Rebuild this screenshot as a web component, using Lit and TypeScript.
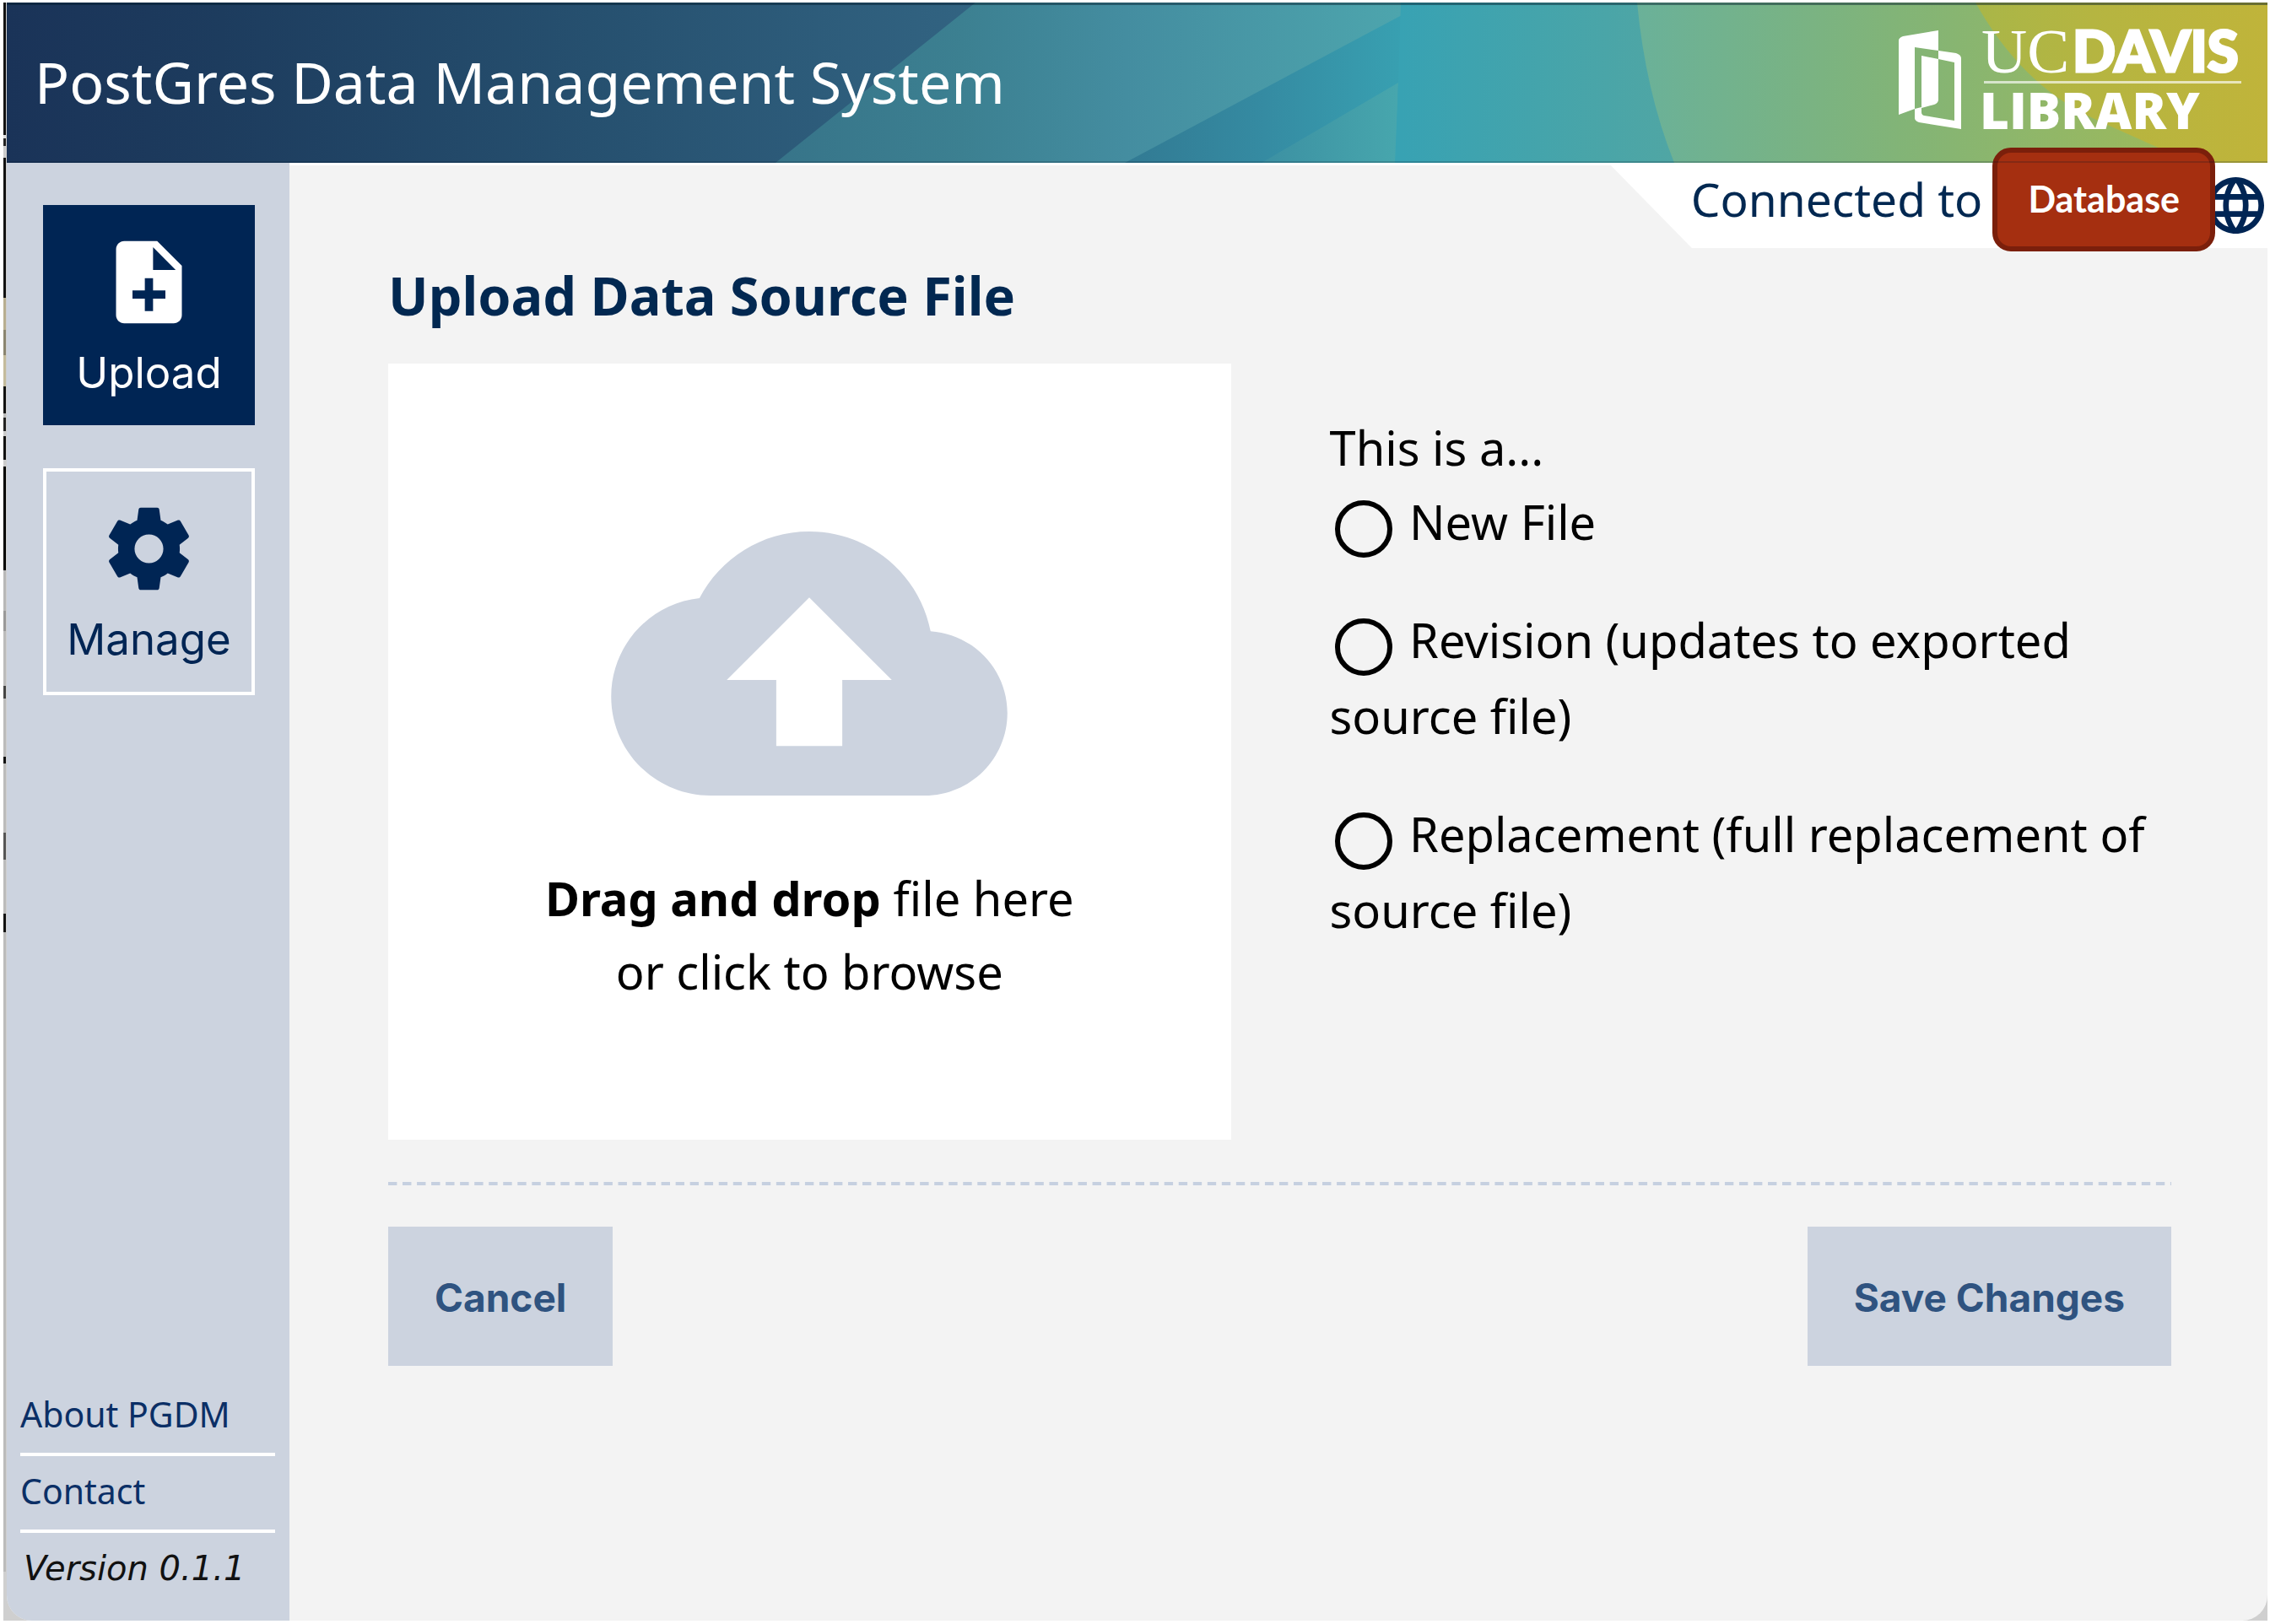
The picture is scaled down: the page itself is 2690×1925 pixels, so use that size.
import { LitElement, html, css, svg } from "lit";
import { customElement, state } from "lit/decorators.js";
import { classMap } from "lit/directives/class-map.js";

const ICONS = {
  upload:
    "M14 2H6c-1.1 0-1.99.9-1.99 2L4 20c0 1.1.89 2 1.99 2H18c1.1 0 2-.9 2-2V8l-6-6zm2 14h-3v3h-2v-3H8v-2h3v-3h2v3h3v2zm-3-7V3.5L18.5 9H13z",
  manage:
    "M12,15.5A3.5,3.5 0 0,1 8.5,12A3.5,3.5 0 0,1 12,8.5A3.5,3.5 0 0,1 15.5,12A3.5,3.5 0 0,1 12,15.5M19.43,12.97C19.47,12.65 19.5,12.33 19.5,12C19.5,11.67 19.47,11.34 19.43,11L21.54,9.37C21.73,9.22 21.78,8.95 21.66,8.73L19.66,5.27C19.54,5.05 19.27,4.96 19.05,5.05L16.56,6.05C16.04,5.66 15.5,5.32 14.87,5.07L14.5,2.42C14.46,2.18 14.25,2 14,2H10C9.75,2 9.54,2.18 9.5,2.42L9.13,5.07C8.5,5.32 7.96,5.66 7.44,6.05L4.95,5.05C4.73,4.96 4.46,5.05 4.34,5.27L2.34,8.73C2.21,8.95 2.27,9.22 2.46,9.37L4.57,11C4.53,11.34 4.5,11.67 4.5,12C4.5,12.33 4.53,12.65 4.57,12.97L2.46,14.63C2.27,14.78 2.21,15.05 2.34,15.27L4.34,18.73C4.46,18.95 4.73,19.03 4.95,18.95L7.44,17.94C7.96,18.34 8.5,18.68 9.13,18.93L9.5,21.58C9.54,21.82 9.75,22 10,22H14C14.25,22 14.46,21.82 14.5,21.58L14.87,18.93C15.5,18.67 16.04,18.34 16.56,17.94L19.05,18.95C19.27,19.03 19.54,18.95 19.66,18.73L21.66,15.27C21.78,15.05 21.73,14.78 21.54,14.63L19.43,12.97Z",
  cloud:
    "M19.35 10.04C18.67 6.59 15.64 4 12 4 9.11 4 6.6 5.64 5.35 8.04 2.34 8.36 0 10.91 0 14c0 3.31 2.69 6 6 6h13c2.76 0 5-2.24 5-5 0-2.64-2.05-4.78-4.65-4.96zM14 13v4h-4v-4H7l5-5 5 5h-3z",
  globe:
    "M11.99 2C6.47 2 2 6.48 2 12s4.47 10 9.99 10C17.52 22 22 17.52 22 12S17.52 2 11.99 2zm6.93 6h-2.95c-.32-1.25-.78-2.45-1.38-3.56 1.84.63 3.37 1.91 4.33 3.56zM12 4.04c.83 1.2 1.48 2.53 1.91 3.96h-3.82c.43-1.43 1.08-2.76 1.91-3.96zM4.26 14C4.1 13.36 4 12.69 4 12s.1-1.36.26-2h3.38c-.08.66-.14 1.32-.14 2 0 .68.06 1.34.14 2H4.26zm.82 2h2.95c.32 1.25.78 2.45 1.38 3.56-1.84-.63-3.37-1.9-4.33-3.56zm2.95-8H5.08c.96-1.66 2.49-2.93 4.33-3.56C8.81 5.55 8.35 6.75 8.03 8zM12 19.96c-.83-1.2-1.48-2.53-1.91-3.96h3.82c-.43 1.43-1.08 2.76-1.91 3.96zM14.34 14H9.66c-.09-.66-.16-1.32-.16-2 0-.68.07-1.35.16-2h4.68c.09.65.16 1.32.16 2 0 .68-.07 1.34-.16 2zm.25 5.56c.6-1.11 1.06-2.31 1.38-3.56h2.95c-.96 1.65-2.49 2.93-4.33 3.56zM16.36 14c.08-.66.14-1.32.14-2 0-.68-.06-1.34-.14-2h3.38c.16.64.26 1.31.26 2s-.1 1.36-.26 2h-3.38z",
};

const FILE_KINDS = [
  { id: "new", label: "New File" },
  { id: "revision", label: "Revision (updates to exported source file)" },
  { id: "replacement", label: "Replacement (full replacement of source file)" },
];

const stops = (id: string, x1: number, x2: number, list: [number, string][]) => svg`
  <linearGradient id=${id} gradientUnits="userSpaceOnUse" x1=${x1} y1="0" x2=${x2} y2="0">
    ${list.map(([offset, color]) => svg`<stop offset=${offset} stop-color=${color} />`)}
  </linearGradient>`;

@customElement("pgdm-header")
class PgdmHeader extends LitElement {
  static styles = css`
    :host {
      display: grid;
      grid-template-columns: minmax(0, 1fr);
      grid-template-rows: 190px;
    }
    .art,
    .bar {
      grid-area: 1 / 1;
    }
    .art {
      display: block;
      width: 100%;
      height: 190px;
    }
    .bar {
      display: flex;
      justify-content: space-between;
      align-items: center;
      padding: 0 30px 4px 33px;
      border-top: 3px solid rgba(0, 25, 40, 0.45);
      border-bottom: 2px solid rgba(0, 25, 40, 0.2);
      box-sizing: border-box;
      z-index: 1;
    }
    h1 {
      margin: 0;
      color: #fff;
      font: 400 68px/90px "Noto Sans", sans-serif;
    }
    .logo {
      display: block;
      width: 408px;
      height: 154px;
      margin-bottom: 4px;
      fill: #fff;
      overflow: visible;
    }
    .uc {
      font: 400 75px "Liberation Serif", serif;
    }
    .davis {
      font: 900 67px Lato, sans-serif;
      stroke: #fff;
      stroke-width: 3px;
    }
    .library {
      font: 800 60px "Open Sans", sans-serif;
    }
  `;

  render() {
    return html`
      <svg class="art" viewBox="8 3 2679 190" preserveAspectRatio="none" aria-hidden="true">
        <defs>
          ${stops("navy", 8, 1160, [[0, "#1a3358"], [0.22, "#1d3c5e"], [0.6, "#26506f"], [1, "#326482"]])}
          ${stops("teal", 919, 1661, [[0, "#377489"], [0.3, "#3c8091"], [0.56, "#448da0"], [1, "#4da5ad"]])}
          ${stops("stripe", 1335, 1661, [[0, "#327a93"], [0.5, "#358ba2"], [1, "#38a0b1"]])}
          ${stops("wedge", 1495, 1655, [[0, "#3c90a2"], [1, "#47a6ad"]])}
          ${stops("aqua", 1661, 1984, [[0, "#38a2b3"], [1, "#50a6a4"]])}
          ${stops("green", 1940, 2560, [[0, "#6ab199"], [0.5, "#82b477"], [1, "#9cb95c"]])}
          ${stops("gold", 2341, 2687, [[0, "#a9b648"], [0.4, "#b5b541"], [1, "#c0b43a"]])}
        </defs>
        <rect x="8" y="3" width="1160" height="190" fill="url(#navy)" />
        <path d="M1156 3H1664V193H919Z" fill="url(#teal)" />
        <path d="M1661 18V193H1333Z" fill="url(#stripe)" />
        <path d="M1657 98L1654 193H1495Z" fill="url(#wedge)" />
        <path d="M1660 3H1990V193H1653L1657 98Z" fill="url(#aqua)" />
        <path d="M1940 3Q1950 108 1984 193H2600V3Z" fill="url(#green)" />
        <path d="M2341 3Q2395 100 2480 140Q2545 170 2600 193H2687V3Z" fill="url(#gold)" />
      </svg>
      <div class="bar">
        <h1>PostGres Data Management System</h1>
        <svg class="logo" viewBox="30 8 408 154" role="img" aria-label="UC Davis Library">
          <path d="M31 38Q31 35 36 33L78 26V50L50 46V119L31 126Z" />
          <path d="M58 56L78 60V108Q78 112 73 114L58 118Z" />
          <path
            fill-rule="evenodd"
            d="M78 50L99 53Q105 55 105 59V143L55 135Q50 133 50 130V119L58 117V123Q58 126 61 127L97 133V64L78 60Z"
          />
          <text class="uc" x="129" y="76">UC</text>
          <text class="davis" x="237" y="75">DAVIS</text>
          <rect x="132" y="86" width="305" height="3" opacity="0.65" />
          <text class="library" x="127" y="143">LIBRARY</text>
        </svg>
      </div>
    `;
  }
}

@customElement("pgdm-sidebar")
class PgdmSidebar extends LitElement {
  @state() private current = "upload";

  static styles = css`
    :host {
      display: flex;
      flex-direction: column;
      justify-content: space-between;
      background: #ccd3df;
    }
    nav {
      display: flex;
      flex-direction: column;
      gap: 51px;
      padding: 50px 41px 0 43px;
    }
    .tile {
      display: flex;
      flex-direction: column;
      align-items: center;
      gap: 19px;
      padding: 33px 0 32px;
      border: 4px solid #fff;
      background: transparent;
      color: #002554;
      font: 400 51px/60px Inter, sans-serif;
      cursor: pointer;
    }
    .tile.current {
      border-width: 0;
      background: #002554;
      color: #fff;
    }
    .tile svg {
      width: 117px;
      height: 117px;
      fill: currentColor;
    }
    footer {
      padding: 0 17px 32px 16px;
      font: 400 41px/60px "Noto Sans", sans-serif;
    }
    .row {
      display: block;
      padding: 11px 0 16px;
      border-bottom: 4px solid #fff;
      color: #0b2f66;
      text-decoration: none;
    }
    .version {
      margin: 0;
      padding: 12px 4px 0;
      color: #111;
      font: italic 400 40px/60px "DejaVu Sans", sans-serif;
    }
  `;

  private tile(id: "upload" | "manage", label: string) {
    return html`<button
      type="button"
      class=${classMap({ tile: true, current: this.current === id })}
      @click=${() => (this.current = id)}
    >
      <svg viewBox="0 0 24 24" aria-hidden="true"><path d=${ICONS[id]} /></svg>
      <span>${label}</span>
    </button>`;
  }

  render() {
    return html`
      <nav>${this.tile("upload", "Upload")}${this.tile("manage", "Manage")}</nav>
      <footer>
        <a class="row" href="#about">About PGDM</a>
        <a class="row" href="#contact">Contact</a>
        <p class="version">Version 0.1.1</p>
      </footer>
    `;
  }
}

@customElement("pgdm-status")
class PgdmStatus extends LitElement {
  static styles = css`
    :host {
      display: flex;
      justify-content: flex-end;
      border-top: 3px solid #fff;
    }
    .tag {
      display: flex;
      align-items: center;
      height: 98px;
      padding: 0 4px 0 95px;
      position: relative;
      isolation: isolate;
      color: #022851;
      font: 400 55px/80px "Noto Sans", sans-serif;
    }
    .tag::before {
      content: "";
      position: absolute;
      inset: 0;
      z-index: -1;
      background: #fff;
      clip-path: polygon(0 0, 100% 0, 100% 100%, 96px 100%);
    }
    .text {
      align-self: flex-start;
      margin-right: 12px;
    }
    .badge {
      z-index: 1;
      box-sizing: border-box;
      margin: -21px 0 -4px;
      padding: 31px 36px 32px;
      border: 6px solid #7b1f0b;
      border-radius: 22px;
      background: #a52f10;
      color: #fff;
      font: 700 43px/48px Lato, sans-serif;
    }
    .globe {
      width: 67px;
      height: 67px;
      margin: 0 0 3px -9px;
      fill: #002554;
    }
  `;

  render() {
    return html`<div class="tag">
      <span class="text">Connected to</span>
      <span class="badge">Database</span>
      <svg class="globe" viewBox="2 2 20 20" aria-hidden="true"><path d=${ICONS.globe} /></svg>
    </div>`;
  }
}

@customElement("pgdm-upload")
class PgdmUpload extends LitElement {
  @state() private kind = "";

  static styles = css`
    :host {
      display: block;
      padding: 16px 114px 0 117px;
      color: #000;
      font: 400 56px/90px "Noto Sans", sans-serif;
    }
    h2 {
      margin: 0 0 41px;
      color: #022851;
      font: 700 63px/80px "Noto Sans", sans-serif;
    }
    .columns {
      display: grid;
      grid-template-columns: 1fr 1fr;
      gap: 116px;
    }
    .drop {
      display: flex;
      flex-direction: column;
      align-items: center;
      gap: 78px;
      padding: 199px 0 156px;
      background: #fff;
      text-align: center;
      line-height: 87px;
      cursor: pointer;
    }
    .drop svg {
      width: 470px;
      height: 313px;
      fill: #ccd3df;
    }
    .drop input {
      display: none;
    }
    fieldset {
      display: flex;
      flex-direction: column;
      gap: 50px;
      min-width: 0;
      margin: 0;
      padding: 56px 0 0 1px;
      border: 0;
    }
    legend {
      float: left;
      padding: 0;
      line-height: 86px;
      margin-bottom: -50px;
    }
    .choice {
      display: block;
    }
    .choice input {
      appearance: none;
      width: 68px;
      height: 68px;
      margin: 0 6px;
      border: 6px solid #000;
      border-radius: 50%;
      vertical-align: -21px;
    }
    .choice input:checked {
      background: radial-gradient(circle, #000 45%, transparent 48%);
    }
    .rule {
      height: 4px;
      margin: 50px 0 49px;
      border: 0;
      background: linear-gradient(90deg, #c6d0e0 10px, transparent 10px) 0 0 / 17px 4px round;
    }
    .actions {
      display: flex;
      justify-content: space-between;
    }
    .actions button {
      padding: 56px 55px 52px;
      border: 0;
      background: #ccd3df;
      color: #2f5380;
      font: 700 46px/57px Inter, sans-serif;
      cursor: pointer;
    }
  `;

  render() {
    return html`
      <h2>Upload Data Source File</h2>
      <div class="columns">
        <label class="drop">
          <input type="file" />
          <svg viewBox="0 4 24 16" aria-hidden="true"><path d=${ICONS.cloud} /></svg>
          <span><b>Drag and drop</b> file here<br />or click to browse</span>
        </label>
        <fieldset>
          <legend>This is a...</legend>
          ${FILE_KINDS.map(
            (k) => html`<label class="choice"
              ><input
                type="radio"
                name="kind"
                value=${k.id}
                .checked=${this.kind === k.id}
                @change=${() => (this.kind = k.id)}
              />
              ${k.label}</label
            >`
          )}
        </fieldset>
      </div>
      <hr class="rule" />
      <div class="actions">
        <button type="button">Cancel</button>
        <button type="button">Save Changes</button>
      </div>
    `;
  }
}

@customElement("app-root")
class AppRoot extends LitElement {
  static styles = css`
    :host {
      display: block;
      background: #fff;
    }
    .page {
      display: flex;
      box-sizing: border-box;
      min-height: 100vh;
      padding: 3px 3px 4px 4px;
    }
    .window {
      flex: 1;
      display: flex;
      min-width: 0;
      padding-left: 4px;
      background:
        linear-gradient(
            #111 157px, #ddd 157px 161px, #222 161px 170px, #ccc 170px 184px, #111 184px 350px,
            #b8ae90 350px 388px, #8a8570 388px 418px, #c4bb9c 418px 455px, #111 455px 487px,
            #bbb 487px 492px, #222 492px 508px, #ccc 508px 514px, #111 514px 542px, #ccc 542px 550px,
            #000 550px 673px, #b8b8b8 673px 721px, #999 721px 745px, #bbb 745px 810px, #444 810px 825px,
            #bbb 825px 894px, #111 894px 902px, #bbb 902px 984px, #555 984px 1016px, #bbb 1016px 1080px,
            #111 1080px 1102px, #bbb 1102px
          )
          0 0 / 3px 1860px no-repeat,
        #cfcfcf;
    }
    .app {
      flex: 1;
      min-width: 0;
      display: grid;
      grid-template-columns: 335px minmax(0, 1fr);
      grid-template-rows: auto 1fr;
      overflow: hidden;
      border-radius: 0 0 30px 30px;
      background: #f3f3f3;
    }
    pgdm-header {
      grid-column: 1 / -1;
    }
  `;

  render() {
    return html`<div class="page">
      <div class="window">
        <div class="app">
          <pgdm-header></pgdm-header>
          <pgdm-sidebar></pgdm-sidebar>
          <main>
            <pgdm-status></pgdm-status>
            <pgdm-upload></pgdm-upload>
          </main>
        </div>
      </div>
    </div>`;
  }
}
